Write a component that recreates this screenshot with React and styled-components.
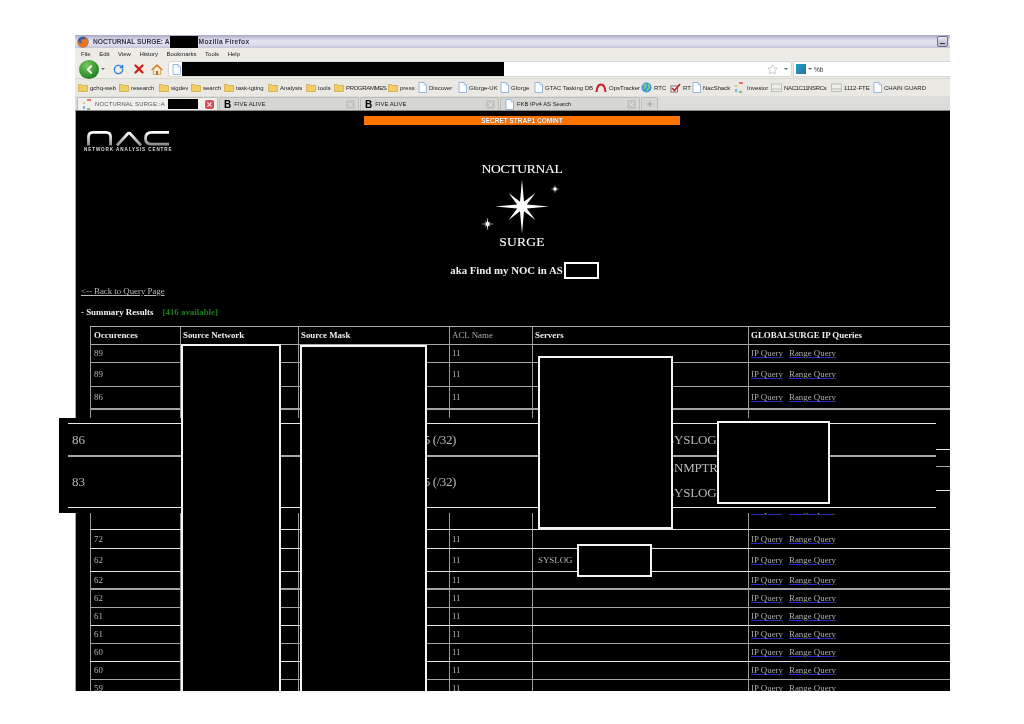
import React from 'react';
import styled, { createGlobalStyle } from 'styled-components';
import { ChevronLeft, RotateCw, X, Star, Plus } from 'lucide-react';

const GlobalStyle = createGlobalStyle`
  * { box-sizing: border-box; }
  html, body { margin: 0; background: #fff; }
  body { font-family: "Liberation Sans", Arial, sans-serif; }
`

const Page = styled.div`
  position: relative;
  width: 1024px;
  height: 724px;
  overflow: hidden;
  padding: 35px 74px 0 75px;
  background: #fff;
  filter: blur(0.35px);
`

const Browser = styled.div`
  height: 656px;
  display: flex;
  flex-direction: column;
`

const TitleBar = styled.div`
  height: 13px;
  flex: none;
  display: flex;
  align-items: center;
  padding: 0 2px 0 2px;
  color: #33334d;
  font-size: 6.7px;
  font-weight: bold;
  white-space: nowrap;
  background: linear-gradient(#a8a8c6, #e4e4f0 45%, #dcdcea 75%, #c4c4da);
`

const TitleText = styled.span`
  margin-left: ${({ $ml }) => $ml}px;
  letter-spacing: ${({ $ls }) => $ls || 0}px;
`

const Blackout = styled.span`
  display: block;
  flex: none;
  background: #000;
  width: ${({ $w }) => $w}px;
  height: ${({ $h }) => $h}px;
`

const MinButton = styled.span`
  margin-left: auto;
  width: 11px;
  height: 11px;
  border: 1px solid #70708c;
  border-radius: 2px;
  background: linear-gradient(#e8e8f0, #b4b4c8);
  display: flex;
  justify-content: center;
  align-items: flex-end;
  padding-bottom: 2px;
  &:after { content: ''; width: 5px; height: 1px; background: #334; }
`

const MenuBar = styled.div`
  height: 12px;
  flex: none;
  display: flex;
  align-items: center;
  gap: 8.5px;
  padding-left: 6px;
  font-size: 6px;
  color: #222;
  background: #ecebe6;
`

const NavBar = styled.div`
  height: 19px;
  flex: none;
  display: flex;
  align-items: center;
  background: #eeede8;
  border-bottom: 1px solid #d8d8d2;
`

const BackButton = styled.span`
  width: 20px;
  height: 19px;
  margin-left: 4px;
  border-radius: 50%;
  flex: none;
  display: flex;
  align-items: center;
  justify-content: center;
  background: radial-gradient(circle at 40% 30%, #7cc85a, #2c8a2a 65%, #1c5f1c);
  color: #fff;
`

const TinyArrow = styled.span`
  width: 0;
  height: 0;
  flex: none;
  margin-left: ${({ $ml }) => $ml}px;
  border-left: 2px solid transparent;
  border-right: 2px solid transparent;
  border-top: 2px solid #666;
`

const NavIcon = styled.span`
  display: flex;
  flex: none;
  margin-left: ${({ $ml }) => $ml}px;
  color: ${({ $color }) => $color || 'inherit'};
`

const UrlBar = styled.div`
  width: 624px;
  height: 16px;
  flex: none;
  margin-left: 5px;
  display: flex;
  align-items: center;
  background: #fff;
  border: 1px solid #d6d6d0;
  border-radius: 3px;
`

const SearchBar = styled.div`
  flex: 1;
  height: 16px;
  margin-left: 1px;
  display: flex;
  align-items: center;
  background: #fff;
  border: 1px solid #d6d6d0;
  border-right: 0;
  font-size: 6.5px;
  color: #333;
`

const SearchLogo = styled.span`
  width: 10px;
  height: 10px;
  margin-left: 2px;
  flex: none;
  background: linear-gradient(135deg, #1fa3c4, #2d6f9c);
`

const SearchText = styled.span`
  margin-left: 2px;
`

const BookmarkBar = styled.div`
  height: 17px;
  flex: none;
  display: flex;
  align-items: center;
  padding-left: 3px;
  background: #e9e8e2;
`

const Bookmark = styled.span`
  width: ${({ $w }) => $w}px;
  flex: none;
  display: flex;
  align-items: center;
  gap: 2px;
  font-size: 6px;
  letter-spacing: ${({ $tight }) => ($tight ? -0.35 : 0)}px;
  color: #222;
  white-space: nowrap;
`

const TabBar = styled.div`
  height: 15px;
  flex: none;
  display: flex;
  align-items: stretch;
  padding: 1px 0 0 2px;
  background: #dcdcd8;
  border-bottom: 1px solid #888;
`

const Tab = styled.div`
  width: ${({ $w }) => $w}px;
  flex: none;
  display: flex;
  align-items: center;
  gap: 3px;
  padding: 0 3px 0 4px;
  margin-right: 1px;
  font-size: 5.9px;
  color: ${({ $active }) => ($active ? '#555' : '#222')};
  background: ${({ $active }) => ($active ? '#f1f0ec' : '#d6d6d2')};
  border: 1px solid #bdbdb8;
  border-bottom: 0;
  border-radius: 2px 2px 0 0;
  white-space: nowrap;
`

const ActiveTabTitle = styled.span`
  margin-left: -1px;
  letter-spacing: 0.2px;
`

const NewTab = styled(Tab)`
  color: #888;
`

const TabMark = styled.span`
  font: bold 10px "Liberation Sans", sans-serif;
  color: #000;
`

const TabClose = styled.span`
  margin-left: auto;
  width: 9px;
  height: 9px;
  flex: none;
  display: flex;
  align-items: center;
  justify-content: center;
  border-radius: 2px;
  color: #fff;
  background: ${({ $active }) => ($active ? '#d8505a' : '#c4c4c0')};
`

const Content = styled.div`
  flex: 1;
  min-height: 0;
  display: flex;
  flex-direction: column;
  background: #000;
  border-left: 1px solid #8aa8dc;
  padding-top: 5px;
  font-family: "Liberation Serif", "Times New Roman", serif;
  overflow: hidden;
`

const Masthead = styled.div`
  display: grid;
  grid-template-columns: 288px 316px 1fr;
  flex: none;
`

const LogoBlock = styled.div`
  padding: 14px 0 0 8px;
  color: #ddd;
`

const LogoCaption = styled.div`
  width: 90px;
  margin-top: 1px;
  font: bold 4.6px/5px "Liberation Sans", sans-serif;
  letter-spacing: 0.9px;
  white-space: nowrap;
`

const Centre = styled.div`
  display: flex;
  flex-direction: column;
  align-items: center;
`

const ClassBar = styled.div`
  width: 100%;
  height: 9px;
  background: #ff7400;
  color: #fff;
  font: bold 6.5px/9px "Liberation Sans", sans-serif;
  text-align: center;
  text-shadow: 0 0 1px #333;
`

const AppName = styled.div`
  margin-top: ${({ $mt }) => $mt}px;
  font-family: "Liberation Serif", serif;
  font-size: 13.5px;
  line-height: 16px;
  color: #fff;
  letter-spacing: ${({ $ls }) => $ls}px;
  -webkit-text-stroke: 0.1px #fff;
`

const Tagline = styled.div`
  margin: 11px 0 0 5px;
  display: flex;
  align-items: center;
  height: 18px;
  font-size: 10.8px;
  font-weight: bold;
  color: #eee;
`

const AsBox = styled.span`
  width: 35px;
  height: 17px;
  margin-left: 1px;
  border: 2px solid #fff;
`

const BackLink = styled.a`
  display: block;
  margin: 5px 0 0 5px;
  font-size: 8.8px;
  line-height: 14px;
  color: #b8b8b8;
  text-decoration: underline;
`

const SummaryLine = styled.div`
  margin: 7px 0 0 5px;
  display: flex;
  gap: 9px;
  font-size: 8.9px;
  line-height: 14px;
  font-weight: bold;
  color: #f0f0f0;
`

const Available = styled.span`
  color: #1c7a1c;
`

const Results = styled.table`
  margin: 7px 0 0 14px;
  width: 860px;
  flex: none;
  table-layout: fixed;
  border-collapse: separate;
  border-spacing: 0;
  font-size: 8.9px;
  color: #b4b4b4;
  border-top: 1px solid #aaa;
`

const HeadCell = styled.th`
  height: 18px;
  padding: 0 2px 1px;
  text-align: left;
  border-left: 1px solid #999;
  border-bottom: 1px solid #aaa;
  font-weight: ${({ $plain }) => ($plain ? 'normal' : 'bold')};
  color: ${({ $plain }) => ($plain ? '#aaa' : '#eee')};
  white-space: nowrap;
  &:first-child { padding-left: 3px; }
`

const Cell = styled.td`
  height: ${({ $h }) => $h}px;
  padding: 0 2px 1px;
  border-left: 1px solid #999;
  border-bottom: ${({ $thick }) => ($thick ? 2 : 1)}px solid ${({ $line }) => $line};
  white-space: nowrap;
  &:first-child { padding-left: 3px; }
`

const ServerName = styled.span`
  margin-left: 3px;
`

const QueryLink = styled.a`
  color: #aaa;
  margin-right: 6px;
  text-decoration: underline;
  text-decoration-color: #2a2ad0;
`

// pasted enlargement lying over the table
const Patch = styled.div`
  position: absolute;
  left: 59px;
  top: 418px;
  width: 877px;
  height: 95px;
  background: #000;
  padding: 5px 0 0 9px;
  font-family: "Liberation Serif", serif;
  font-size: 13px;
  color: #b8b8b8;
`

const PatchRow = styled.div`
  height: ${({ $h }) => $h}px;
  display: grid;
  grid-template-columns: 253px 131px 1fr;
  grid-template-rows: minmax(0, 1fr);
  align-items: center;
  border-top: ${({ $line }) => $line};
  border-bottom: ${({ $bottom }) => $bottom || 0};
  padding-left: 4px;
  white-space: nowrap;
`

const PatchMask = styled.span`
  text-align: right;
  letter-spacing: -0.4px;
  grid-column: 2;
`

const PatchServers = styled.div`
  grid-column: 3;
  padding: 0 0 ${({ $pb }) => $pb || 0}px 211px;
  line-height: 25px;
  letter-spacing: -0.2px;
`

const Redaction = styled.div`
  position: absolute;
  left: ${({ $x }) => $x}px;
  top: ${({ $y }) => $y}px;
  width: ${({ $w }) => $w}px;
  height: ${({ $h }) => $h}px;
  background: #000;
  border: 2px solid #f4f4f4;
`

const Glyph = styled.svg`
  flex: none;
  display: block;
`

const FolderIcon = () => (
  <Glyph width="10" height="9" viewBox="0 0 10 9">
    <path d="M0.5 1.5h3l1 1h5v6h-9z" fill="#f0ce62" stroke="#c49a30" strokeWidth="0.6" />
  </Glyph>
)

const DocIcon = () => (
  <Glyph width="9" height="11" viewBox="0 0 9 11">
    <path d="M1 .5h5l2.5 2.5v7.5h-7.5z" fill="#fff" stroke="#7ea6d8" strokeWidth="0.8" />
    <path d="M6 .5v2.5h2.5" fill="#d4e4f6" stroke="#7ea6d8" strokeWidth="0.5" />
  </Glyph>
)

const ArcIcon = () => (
  <Glyph width="12" height="10" viewBox="0 0 12 10">
    <path d="M1.5 9C2 3 4 1.5 6 1.5S10 3 10.5 9" fill="none" stroke="#c8202a" strokeWidth="2" />
  </Glyph>
)

const GlobeIcon = () => (
  <Glyph width="11" height="11" viewBox="0 0 11 11">
    <circle cx="5.5" cy="5.5" r="5" fill="#3b97d6" />
    <path d="M2 3c2-1 3 0 3 1s-2 1-2 3M7 2c1 1 2 2 1 4s-2 1-2 3" fill="none" stroke="#8fd27a" strokeWidth="1.4" />
  </Glyph>
)

const CheckIcon = () => (
  <Glyph width="11" height="10" viewBox="0 0 11 10">
    <rect x="1" y="3" width="6.5" height="6" fill="#fff" stroke="#555" strokeWidth="0.8" />
    <path d="M2 5l2.5 2.5L10 1" fill="none" stroke="#c8202a" strokeWidth="1.7" />
  </Glyph>
)

const SpinIcon = () => (
  <Glyph width="11" height="11" viewBox="0 0 11 11">
    <g fill="none" strokeWidth="1.4">
      <path d="M5 1H9" stroke="#e4483c" />
      <path d="M2 3V5" stroke="#f2b632" />
      <path d="M2 7V10" stroke="#4a9ae0" />
      <path d="M5 10H8" stroke="#58b04a" />
    </g>
  </Glyph>
)

const TrayIcon = () => (
  <Glyph width="11" height="9" viewBox="0 0 11 9">
    <rect x="0.5" y="1" width="10" height="7.5" fill="#efefea" stroke="#a8a8a4" strokeWidth="0.7" />
    <path d="M1 6h9" stroke="#b8b8b4" />
  </Glyph>
)

const FirefoxIcon = () => (
  <Glyph width="12" height="12" viewBox="0 0 12 12">
    <circle cx="6" cy="6" r="5.6" fill="#3f5ea8" />
    <path d="M1 7c0 3 3 4.6 5 4.6 3.4 0 5.6-3 5.4-5.8C11 3 9.6 1.2 7.6 .8c1 1 1.2 2.2.8 3C7.6 3 6 3 5 3.6 3.6 4.4 4 6.4 5.6 6.8 4 7.6 2 7 1 4.6.8 5.4.9 6.2 1 7z" fill="#e8761c" />
  </Glyph>
)

const HomeIcon = () => (
  <Glyph width="12" height="11" viewBox="0 0 12 11">
    <path d="M2.4 5v5.5h7.2V5L6 1.8z" fill="#f8ecc8" stroke="#c89838" strokeWidth="0.8" />
    <path d="M.6 6L6 1l5.4 5" fill="none" stroke="#d8822c" strokeWidth="1.4" />
    <rect x="5" y="7" width="2" height="3.5" fill="#b8662c" />
  </Glyph>
)

// eight pointed star: long arms on the axes, shorter ones on the diagonals
const starPoints = (cx, cy, long, short, inner) => {
  const pts = []
  for (let i = 0; i < 16; i++) {
    const angle = (i * Math.PI) / 8
    const r = i % 2 ? inner : i % 4 === 0 ? long : short
    pts.push(`${(cx + r * Math.sin(angle)).toFixed(1)},${(cy - r * Math.cos(angle)).toFixed(1)}`)
  }
  return pts.join(' ')
}

const StarSvg = styled.svg`
  display: block;
  overflow: visible;
  margin-top: -1px;
`

const StarLogo = () => (
  <StarSvg width="90" height="58" viewBox="0 0 90 58">
    <polygon points={starPoints(45, 30.5, 27, 19, 5.2)} fill="#fff" />
    <polygon points={starPoints(78, 13, 4.5, 2.6, 1.3)} fill="#fff" />
    <polygon points={starPoints(10.5, 48, 7, 4, 1.5)} fill="#fff" />
  </StarSvg>
)

const NacLogo = () => (
  <Glyph width="90" height="16" viewBox="0 0 90 16">
    <defs>
      <linearGradient id="nacShade" x1="0" y1="0" x2="0" y2="1">
        <stop offset="0" stopColor="#fff" />
        <stop offset="1" stopColor="#8c8c8c" />
      </linearGradient>
    </defs>
    <g fill="none" stroke="url(#nacShade)" strokeWidth="2.8">
      <path d="M4.5 15.5V7Q4.5 2.4 9 2.4H22Q26.6 2.4 26.6 7V15.5" />
      <path d="M33 15.5L43.5 4Q45 2.4 46.5 4L57 15.5" />
      <path d="M85 2.4H68Q61.5 2.4 61.5 8.4T68 14.2H85" />
    </g>
  </Glyph>
)

const MENU = ['File', 'Edit', 'View', 'History', 'Bookmarks', 'Tools', 'Help']

const ICONS = {
  folder: FolderIcon,
  doc: DocIcon,
  arc: ArcIcon,
  globe: GlobeIcon,
  check: CheckIcon,
  spin: SpinIcon,
  tray: TrayIcon,
}

const BOOKMARKS = [
  ['gchq-web', 'folder', 41],
  ['research', 'folder', 40],
  ['sigdev', 'folder', 32],
  ['search', 'folder', 33],
  ['task-tgting', 'folder', 44],
  ['Analysis', 'folder', 38],
  ['tools', 'folder', 28],
  ['PROGRAMMES', 'folder', 54, true],
  ['press', 'folder', 30],
  ['Discover', 'doc', 40],
  ['Gforge-UK', 'doc', 42],
  ['Gforge', 'doc', 34],
  ['GTAC Tasking DB', 'doc', 61],
  ['OpsTracker', 'arc', 46],
  ['RTC', 'globe', 29],
  ['RT', 'check', 22],
  ['NacShack', 'doc', 42],
  ['Investor', 'spin', 37],
  ['NAC1C11NSRCs', 'tray', 60, true],
  ['1112-FTE', 'tray', 42],
  ['CHAIN GUARD', 'doc', 58],
]

const COLUMNS = [90, 118, 151, 83, 216, 202]

const LIGHT = '#e4e4e4'
const GREY = '#a4a4a4'

const ROWS = [
  { occ: '89', h: 18, line: GREY },
  { occ: '89', h: 24, line: GREY },
  { occ: '86', h: 23, line: GREY, thick: true },
  // these three lie under the pasted enlargement
  { h: 40, line: LIGHT, covered: true },
  { h: 17, line: GREY, covered: true },
  { h: 24, line: LIGHT, covered: true },
  { occ: '79', h: 39, line: LIGHT },
  { occ: '72', h: 19, line: LIGHT },
  { occ: '62', h: 23, line: LIGHT, servers: 'SYSLOG' },
  { occ: '62', h: 18, line: GREY, thick: true },
  { occ: '62', h: 18, line: GREY },
  { occ: '61', h: 18, line: LIGHT },
  { occ: '61', h: 18, line: GREY },
  { occ: '60', h: 18, line: LIGHT },
  { occ: '60', h: 18, line: GREY },
  { occ: '59', h: 18, line: GREY },
]

const REDACTIONS = [
  { x: 181, y: 344, w: 100, h: 349 },
  { x: 300, y: 345, w: 127, h: 348 },
  { x: 538, y: 356, w: 135, h: 173 },
  { x: 717, y: 421, w: 113, h: 83 },
  { x: 577, y: 544, w: 75, h: 33 },
]

const App = () => (
  <Page>
    <GlobalStyle />
    <Browser>
      <TitleBar>
        <FirefoxIcon />
        <TitleText $ml={4}>NOCTURNAL SURGE: A</TitleText>
        <Blackout $w={28} $h={12} />
        <TitleText $ml={1} $ls={0.3}>Mozilla Firefox</TitleText>
        <MinButton />
      </TitleBar>
      <MenuBar>
        {MENU.map(item => <span key={item}>{item}</span>)}
      </MenuBar>
      <NavBar>
        <BackButton><ChevronLeft size={13} strokeWidth={3.5} /></BackButton>
        <TinyArrow $ml={2} />
        <NavIcon $ml={8} $color="#2f7fd8"><RotateCw size={11} strokeWidth={3} /></NavIcon>
        <NavIcon $ml={8} $color="#d0201c"><X size={14} strokeWidth={4} /></NavIcon>
        <NavIcon $ml={5}><HomeIcon /></NavIcon>
        <UrlBar>
          <NavIcon $ml={3}><DocIcon /></NavIcon>
          <NavIcon $ml={1}><Blackout $w={322} $h={14} /></NavIcon>
          <NavIcon $ml={263} $color="#999"><Star size={11} strokeWidth={1.2} /></NavIcon>
          <TinyArrow $ml={6} />
        </UrlBar>
        <SearchBar>
          <SearchLogo />
          <TinyArrow $ml={2} />
          <SearchText>%b</SearchText>
        </SearchBar>
      </NavBar>
      <BookmarkBar>
        {BOOKMARKS.map(([label, icon, width, tight]) => {
          const Icon = ICONS[icon]
          return <Bookmark key={label} $w={width} $tight={tight}><Icon />{label}</Bookmark>
        })}
      </BookmarkBar>
      <TabBar>
        <Tab $w={141} $active>
          <SpinIcon />
          <ActiveTabTitle>NOCTURNAL SURGE::A</ActiveTabTitle>
          <Blackout $w={30} $h={10} />
          <TabClose $active><X size={7} strokeWidth={3.5} /></TabClose>
        </Tab>
        <Tab $w={140}><TabMark>B</TabMark>FIVE ALIVE<TabClose><X size={7} /></TabClose></Tab>
        <Tab $w={139}><TabMark>B</TabMark>FIVE ALIVE<TabClose><X size={7} /></TabClose></Tab>
        <Tab $w={140}><DocIcon />FKB IPv4 AS Search<TabClose><X size={7} /></TabClose></Tab>
        <NewTab $w={17}><Plus size={8} /></NewTab>
      </TabBar>
      <Content>
        <Masthead>
          <LogoBlock>
            <NacLogo />
            <LogoCaption>NETWORK ANALYSIS CENTRE</LogoCaption>
          </LogoBlock>
          <Centre>
            <ClassBar>SECRET STRAP1 COMINT</ClassBar>
            <AppName $mt={36} $ls={-0.25}>NOCTURNAL</AppName>
            <StarLogo />
            <AppName $mt={0} $ls={0.2}>SURGE</AppName>
            <Tagline>aka Find my NOC in AS<AsBox /></Tagline>
          </Centre>
        </Masthead>
        <BackLink>&lt;-- Back to Query Page</BackLink>
        <SummaryLine>
          <span>- Summary Results</span>
          <Available>[416 available]</Available>
        </SummaryLine>
        <Results>
          <colgroup>
            {COLUMNS.map((width, idx) => <col key={idx} style={{ width }} />)}
          </colgroup>
          <thead>
            <tr>
              <HeadCell>Occurences</HeadCell>
              <HeadCell>Source Network</HeadCell>
              <HeadCell>Source Mask</HeadCell>
              <HeadCell $plain>ACL Name</HeadCell>
              <HeadCell>Servers</HeadCell>
              <HeadCell>GLOBALSURGE IP Queries</HeadCell>
            </tr>
          </thead>
          <tbody>
            {ROWS.map((row, idx) => {
              const cell = { $h: row.h, $line: row.line, $thick: row.thick }
              return (
                <tr key={idx}>
                  <Cell {...cell}>{row.occ}</Cell>
                  <Cell {...cell} />
                  <Cell {...cell} />
                  <Cell {...cell}>{!row.covered && '11'}</Cell>
                  <Cell {...cell}>{row.servers && <ServerName>{row.servers}</ServerName>}</Cell>
                  <Cell {...cell}>
                    {!row.covered && <QueryLink>IP Query</QueryLink>}
                    {!row.covered && <QueryLink>Range Query</QueryLink>}
                  </Cell>
                </tr>
              )
            })}
          </tbody>
        </Results>
      </Content>
    </Browser>

    <Patch>
      <PatchRow $h={32} $line="1.5px solid #e8e8e8">
        <span>86</span>
        <PatchMask>255.255.255.255 (/32)</PatchMask>
        <PatchServers>SYSLOG</PatchServers>
      </PatchRow>
      <PatchRow $h={53} $line="2px solid #a8a8a8" $bottom="1.5px solid #e8e8e8">
        <span>83</span>
        <PatchMask>255.255.255.255 (/32)</PatchMask>
        <PatchServers $pb={5}>SNMPTRAP<br />SYSLOG</PatchServers>
      </PatchRow>
    </Patch>

    {REDACTIONS.map(box => (
      <Redaction key={box.x} $x={box.x} $y={box.y} $w={box.w} $h={box.h} />
    ))}
  </Page>
)

export default App
